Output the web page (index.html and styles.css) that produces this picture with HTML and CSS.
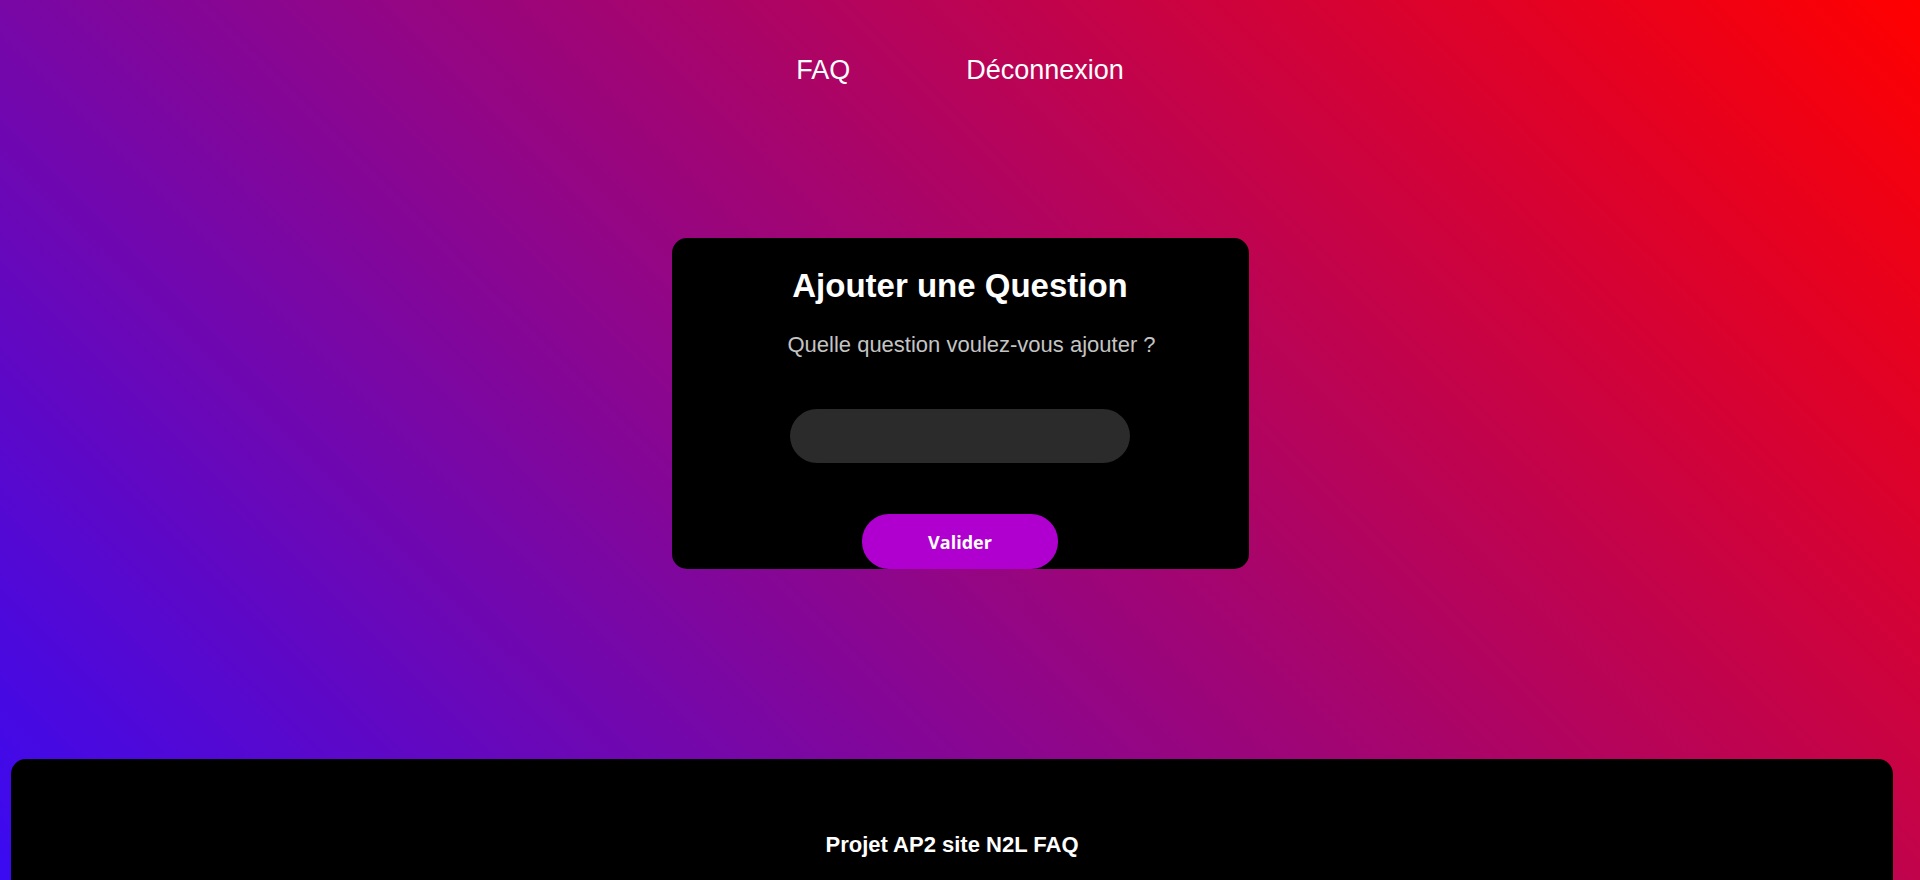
FILE: index.html
```html
<!DOCTYPE html>
<html lang="fr">

<head>
    <meta charset="UTF-8">
    <meta name="viewport" content="width=device-width, initial-scale=1.0">
    <title>Ajouter une question</title>
    <link rel="stylesheet" href="styles.css">
</head>

<body>
    <header class="nav">
        <a class="nav__link" href="#">FAQ</a>
        <a class="nav__link" href="#">Déconnexion</a>
    </header>

    <main class="add">
        <form class="add__card" onsubmit="return false">
            <h1 class="add__title">Ajouter une Question</h1>
            <label class="add__label" for="question">Quelle question voulez-vous ajouter ?</label>
            <input class="add__input" id="question" type="text" name="question">
            <button class="add__btn" type="submit">Valider</button>
        </form>
    </main>

    <footer class="footer">
        <p class="footer__text">Projet AP2 site N2L FAQ</p>
    </footer>
</body>

</html>
```

FILE: styles.css
```css
html {
    min-height: 100%;
    background: linear-gradient(45deg, #3a0af2, #ff0000) fixed;
}

body {
    margin: 0;
    font-family: "Liberation Sans", Arial, sans-serif;
    color: #fff;
}

::-webkit-scrollbar {
    width: 8px;
    background: transparent;
}

::-webkit-scrollbar-thumb {
    background-color: #8a8a8a;
    border-left: 1px solid transparent;
    border-right: 4px solid transparent;
    background-clip: padding-box;
}

.nav {
    display: flex;
    justify-content: center;
    gap: 116px;
    padding-top: 55px;
}

.nav__link {
    font-size: 27px;
    color: #fff;
    text-decoration: none;
}

.add {
    display: flex;
    justify-content: center;
    padding-top: 152px;
}

.add__card {
    width: 577px;
    height: 331px;
    box-sizing: border-box;
    padding-top: 29px;
    background-color: #000;
    border-radius: 15px;
    display: flex;
    flex-direction: column;
    align-items: center;
}

.add__title {
    margin: 0;
    font-size: 33px;
    font-weight: bold;
}

.add__label {
    margin-top: 27px;
    padding-left: 23px;
    font-size: 22px;
    color: #c4c4c4;
}

.add__input {
    margin-top: 51px;
    width: 340px;
    height: 54px;
    box-sizing: border-box;
    border: 0;
    outline: 0;
    border-radius: 27px;
    background-color: #2a2b2a;
    color: #fff;
    padding: 0 20px;
    font-size: 18px;
}

.add__btn {
    margin-top: 51px;
    width: 196px;
    height: 55px;
    border: 0;
    border-radius: 27px;
    background-color: #b000d0;
    color: #fff;
    font: bold 18px "Open Sans", sans-serif;
    cursor: pointer;
}

.footer {
    margin: 190px 27px 8px 11px;
    padding: 73px 20px 180px;
    background-color: #000;
    border-radius: 15px;
    text-align: center;
}

.footer__text {
    margin: 0;
    font-size: 22px;
    font-weight: bold;
}
```
